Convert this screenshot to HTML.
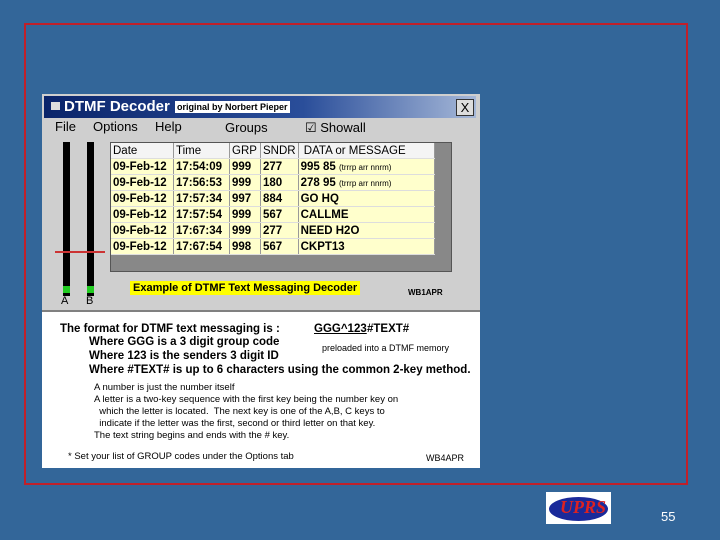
<!DOCTYPE html>
<html><head><style>
body{margin:0;width:720px;height:540px;background:#336699;position:relative;overflow:hidden;font-family:"Liberation Sans",sans-serif}
.a{position:absolute}
.frame{left:24px;top:23px;width:660px;height:458px;border:2px solid #c0202a}
.img{left:42px;top:94px;width:438px;height:374px;background:#fff}
.win{left:0;top:0;width:438px;height:216px;background:#cfcfcf;border-bottom:2px solid #808080}
.title{left:2px;top:2px;width:432px;height:22px;background:linear-gradient(90deg,#0a246a,#2a4e9a 60%,#a6b8d8)}
.t{font-size:12px;white-space:nowrap}
table{border-collapse:collapse;font-size:11.5px;font-weight:bold}
td{height:15px;padding:0 2px;border-right:1px solid #999;border-bottom:1px solid #ddd;white-space:nowrap}
</style></head><body>
<div class="a frame"></div>
<div class="a img">
 <div class="a win">
  <div class="a title"></div>
  <div class="a" style="left:9px;top:8px;width:9px;height:8px;background:#ddd"></div>
  <div class="a t" style="left:22px;top:4px;color:#fff;font-weight:bold;font-size:15px">DTMF Decoder</div>
  <div class="a t" style="left:133px;top:7px;background:#fff;font-size:9px;font-weight:bold;padding:1px 2px">original by Norbert Pieper</div>
  <div class="a" style="left:414px;top:5px;width:16px;height:15px;background:#ddd;border:1px solid #333;font-size:13px;text-align:center;line-height:15px">X</div>
  <div class="a t" style="left:13px;top:25px;font-size:13px">File</div>
  <div class="a t" style="left:51px;top:25px;font-size:13px">Options</div>
  <div class="a t" style="left:113px;top:25px;font-size:13px">Help</div>
  <div class="a t" style="left:183px;top:26px;font-size:13px">Groups</div>
  <div class="a t" style="left:263px;top:26px;font-size:13px">☑ Showall</div>
  <div class="a" style="left:21px;top:48px;width:7px;height:154px;background:#000"></div>
  <div class="a" style="left:21px;top:192px;width:7px;height:7px;background:#2c2"></div>
  <div class="a" style="left:45px;top:48px;width:7px;height:154px;background:#000"></div>
  <div class="a" style="left:45px;top:192px;width:7px;height:7px;background:#2c2"></div>
  <div class="a" style="left:13px;top:157px;width:50px;height:2px;background:#c33"></div>
  <div class="a t" style="left:19px;top:201px;font-size:11px">A</div>
  <div class="a t" style="left:44px;top:201px;font-size:11px">B</div>
  <div class="a" style="left:68px;top:48px;width:340px;height:128px;background:#888;border:1px solid #555">
   <table style="background:#ffffcc;width:324px">
    <tr style="background:#f4f4f4;font-weight:normal"><td style="width:58px">Date</td><td style="width:51px">Time</td><td style="width:26px">GRP</td><td style="width:32px">SNDR</td><td>&nbsp;DATA or MESSAGE</td></tr>
    <tr><td>09-Feb-12</td><td>17:54:09</td><td>999</td><td>277</td><td>995 85 <span style="font-size:8px;font-weight:normal">(trrrp arr nnrm)</span></td></tr>
    <tr><td>09-Feb-12</td><td>17:56:53</td><td>999</td><td>180</td><td>278 95 <span style="font-size:8px;font-weight:normal">(trrrp arr nnrm)</span></td></tr>
    <tr><td>09-Feb-12</td><td>17:57:34</td><td>997</td><td>884</td><td>GO HQ</td></tr>
    <tr><td>09-Feb-12</td><td>17:57:54</td><td>999</td><td>567</td><td>CALLME</td></tr>
    <tr><td>09-Feb-12</td><td>17:67:34</td><td>999</td><td>277</td><td>NEED H2O</td></tr>
    <tr><td>09-Feb-12</td><td>17:67:54</td><td>998</td><td>567</td><td>CKPT13</td></tr>
   </table>
  </div>
  <div class="a t" style="left:88px;top:187px;background:#ff0;font-weight:bold;font-size:11px;padding:0 3px;line-height:14px">Example of DTMF Text Messaging Decoder</div>
  <div class="a t" style="left:366px;top:194px;font-size:8px;font-weight:bold">WB1APR</div>
 </div>
 <div class="a t" style="left:18px;top:229px;font-weight:bold;font-size:11.5px">The format for DTMF text messaging is :</div>
 <div class="a t" style="left:272px;top:229px;font-weight:bold;font-size:11.5px;text-decoration:underline">GGG^123</div><div class="a t" style="left:325px;top:229px;font-weight:bold;font-size:11.5px">#TEXT#</div>
 <div class="a t" style="left:280px;top:249px;font-size:9px">preloaded into a DTMF memory</div>
 <div class="a t" style="left:47px;top:242px;font-weight:bold;font-size:11.5px">Where GGG is a 3 digit group code</div>
 <div class="a t" style="left:47px;top:256px;font-weight:bold;font-size:11.5px">Where 123 is the senders 3 digit ID</div>
 <div class="a t" style="left:47px;top:270px;font-weight:bold;font-size:11.5px">Where #TEXT# is up to 6 characters using the common 2-key method.</div>
 <div class="a t" style="left:52px;top:288px;font-size:9.5px;line-height:12px">A number is just the number itself<br>A letter is a two-key sequence with the first key being the number key on<br>&nbsp;&nbsp;which the letter is located.&nbsp; The next key is one of the A,B, C keys to<br>&nbsp;&nbsp;indicate if the letter was the first, second or third letter on that key.<br>The text string begins and ends with the # key.</div>
 <div class="a t" style="left:26px;top:357px;font-size:9.5px">* Set your list of GROUP codes under the Options tab</div>
 <div class="a t" style="left:384px;top:359px;font-size:9px">WB4APR</div>
</div>
<div class="a" style="left:546px;top:492px;width:65px;height:32px;background:#fff"></div>
<div class="a" style="left:549px;top:497px;width:59px;height:24px;border-radius:50%;background:#1a2a9a"></div>
<div class="a t" style="left:560px;top:497px;color:#d22;font:italic bold 18px 'Liberation Serif',serif">UPRS</div>
<div class="a t" style="left:661px;top:509px;color:#fff;font-size:13px">55</div>
</body></html>
